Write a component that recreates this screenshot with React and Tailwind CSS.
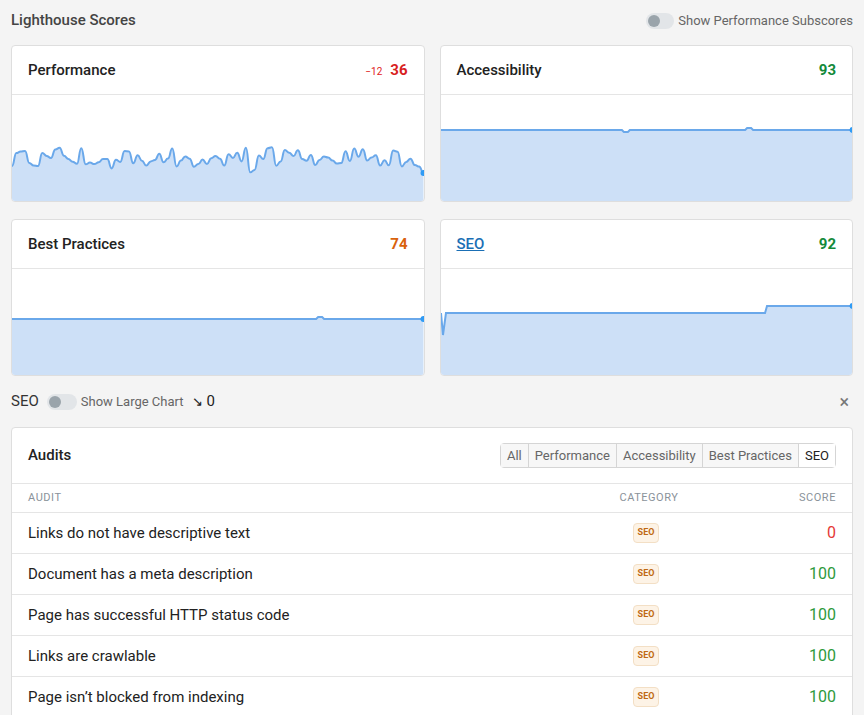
import React from "react";

const W = 414, H = 106;
function perfPoints() {
  let s = 11; const r = () => { s = (s * 9301 + 49297) % 233280; return s / 233280; };
  const pts = [];
  for (let i = 0; i <= 95; i++) { const x = (i / 95) * W; pts.push([x, 52 + r() * 20 + (r() > 0.8 ? 6 : 0)]); }
  pts[pts.length - 1][1] = 78;
  return pts;
}
function Chart({ pts, smooth }) {
  let line;
  if (smooth) {
    line = "M" + pts[0][0] + " " + pts[0][1];
    for (let i = 1; i < pts.length; i++) { const [x0, y0] = pts[i - 1], [x1, y1] = pts[i]; const mx = (x0 + x1) / 2; line += ` C ${mx.toFixed(1)} ${y0.toFixed(1)} ${mx.toFixed(1)} ${y1.toFixed(1)} ${x1.toFixed(1)} ${y1.toFixed(1)}`; }
  } else line = pts.map((p, i) => (i ? "L" : "M") + p[0].toFixed(1) + " " + p[1].toFixed(1)).join(" ");
  const area = line + ` L ${W} ${H} L 0 ${H} Z`;
  const last = pts[pts.length - 1];
  return (
    <svg width="100%" height={H} viewBox={`0 0 ${W} ${H}`} preserveAspectRatio="none" className="block">
      <path d={area} fill="#cde0f7" />
      <path d={line} fill="none" stroke="#6aa8ea" strokeWidth="2" />
      <circle cx={last[0]} cy={last[1]} r="3" fill="#2f9bf5" />
    </svg>
  );
}
const flat = (y, bumps = []) => {
  const p = [];
  for (let x = 0; x <= W; x += 2) { let yy = y; bumps.forEach(([bx, d]) => { if (Math.abs(x - bx) < 3) yy = y + d; }); p.push([x, yy]); }
  return p;
};
const seoPts = [[0, 44], [2, 66], [5, 44], [326, 44], [328, 37], [414, 37]];

function Card({ title, score, color, delta, link, pts, smooth }) {
  return (
    <div className="bg-white border border-[#dedede] rounded overflow-hidden">
      <div className="h-[49px] flex items-center justify-between px-4 border-b border-[#e5e5e5]">
        <span className={link ? "text-[15px] text-[#1a6fb5] underline font-medium" : "text-[15px] text-[#222] font-medium"}>{title}</span>
        <div className="flex items-baseline gap-2">
          {delta && <span className="text-[10px] text-[#e02020]">−12</span>}
          <span className={`text-[15px] font-bold ${color}`}>{score}</span>
        </div>
      </div>
      <Chart pts={pts} smooth={smooth} />
    </div>
  );
}

const rows = [["Links do not have descriptive text", "0", "text-[#e53935]"], ["Document has a meta description", "100", "text-[#2e9a3c]"], ["Page has successful HTTP status code", "100", "text-[#2e9a3c]"], ["Links are crawlable", "100", "text-[#2e9a3c]"], ["Page isn’t blocked from indexing", "100", "text-[#2e9a3c]"]];

export default function App() {
  return (
    <div className="w-[864px] h-[715px] overflow-hidden bg-[#f4f4f4] px-[11px] text-[#222]" style={{ fontFamily: "Roboto, sans-serif" }}>
      <div className="h-[45px] flex items-center justify-between pb-1">
        <span className="text-[15px] text-[#444] font-medium">Lighthouse Scores</span>
        <div className="flex items-center gap-1 text-[13px] text-[#666]">
          <span className="w-[28px] h-[16px] rounded-full bg-[#e2e5e8] flex items-center px-[2px]"><span className="w-[12px] h-[12px] rounded-full bg-[#9aa4ab]" /></span>
          Show Performance Subscores
        </div>
      </div>
      <div className="grid grid-cols-2 gap-x-[15px] gap-y-[17px]">
        <Card title="Performance" score="36" color="text-[#d81f1f]" delta pts={perfPoints()} smooth />
        <Card title="Accessibility" score="93" color="text-[#138a3a]" pts={flat(35, [[186, 2], [310, -2]])} />
        <Card title="Best Practices" score="74" color="text-[#d9620c]" pts={flat(50, [[310, -2]])} />
        <Card title="SEO" score="92" color="text-[#138a3a]" link pts={seoPts} />
      </div>
      <div className="h-[51px] flex items-center justify-between">
        <div className="flex items-center gap-1">
          <span className="text-[15px] text-[#333]">SEO</span>
          <span className="w-[30px] h-[16px] rounded-full bg-[#e2e5e8] flex items-center px-[2px] ml-1"><span className="w-[12px] h-[12px] rounded-full bg-[#9aa4ab]" /></span>
          <span className="text-[13px] text-[#666]">Show Large Chart</span>
          <span className="text-[13px] ml-1">↘</span><span className="text-[15px]">0</span>
        </div>
        <span className="text-[#777] text-[18px] mr-1">×</span>
      </div>
      <div className="bg-white border border-[#dedede] rounded">
        <div className="h-[56px] flex items-center justify-between px-4 border-b border-[#e5e5e5]">
          <span className="text-[15px] font-medium">Audits</span>
          <div className="flex border border-[#d5d5d5] rounded text-[13px] text-[#666] h-[25px]">
            {["All", "Performance", "Accessibility", "Best Practices", "SEO"].map((t, i) => (
              <span key={t} className={`px-[6px] flex items-center ${i ? "border-l border-[#d5d5d5]" : ""} ${t === "SEO" ? "bg-white text-[#222]" : "bg-[#f7f7f7]"}`}>{t}</span>
            ))}
          </div>
        </div>
        <div className="h-[29px] flex items-center px-4 text-[11px] tracking-wider text-[#8a929a] border-b border-[#e5e5e5]">
          <span className="flex-1">AUDIT</span><span className="w-[100px] text-center mr-[100px]">CATEGORY</span><span>SCORE</span>
        </div>
        {rows.map(([t, s, c]) => (
          <div key={t} className="h-[41px] flex items-center px-4 border-b border-[#e5e5e5] text-[15px]">
            <span className="flex-1">{t}</span>
            <span className="w-[100px] mr-[100px] flex justify-center"><span className="text-[9px] font-bold text-[#c06a12] bg-[#fdf3e6] border border-[#f3dfc5] rounded px-[4px] py-[2px]">SEO</span></span>
            <span className={`w-[40px] text-right text-[16px] ${c}`}>{s}</span>
          </div>
        ))}
      </div>
    </div>
  );
}
